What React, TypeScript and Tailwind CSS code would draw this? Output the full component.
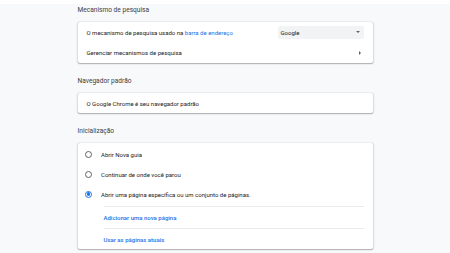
import React from "react"

const card =
  "rounded-[2px] bg-white shadow-[0_0.5px_1px_rgba(60,64,67,0.3),0_0.5px_1.5px_0.5px_rgba(60,64,67,0.15)]"

function SectionTitle({ children, first }: { children: React.ReactNode; first?: boolean }) {
  return (
    <div className={`${first ? "mt-[4px]" : "mt-[12px]"} mb-[6px] h-[12px] leading-[12px] text-[6.6px] text-[#3c4043]`}>
      {children}
    </div>
  )
}

function Radio({ checked }: { checked?: boolean }) {
  return (
    <span
      className={`grid size-[7px] place-items-center rounded-full border ${checked ? "border-[#1a73e8]" : "border-[#5f6368]"}`}
    >
      {checked && <span className="size-[3.5px] rounded-full bg-[#1a73e8]" />}
    </span>
  )
}

function RadioRow({ label, checked }: { label: string; checked?: boolean }) {
  return (
    <div className="flex h-[20px] items-center gap-[9px] pl-[7.5px]">
      <Radio checked={checked} />
      <span className="text-[6px] text-[#202124]">{label}</span>
    </div>
  )
}

export default function App() {
  return (
    <div className="min-h-[253px] w-full bg-[#f8f9fa] font-['Roboto',sans-serif]">
      <div className="mx-auto w-[295px]">
        <SectionTitle first>Mecanismo de pesquisa</SectionTitle>
        <div className={card}>
          <div className="flex h-[20px] items-center justify-between pl-[9px] pr-[9px]">
            <span className="text-[6px] text-[#202124]">
              O mecanismo de pesquisa usado na <span className="text-[#1a73e8]">barra de endereço</span>
            </span>
            <div className="flex h-[13px] w-[86px] items-center justify-between rounded-[2px] bg-[#f1f3f4] pl-[3px] pr-[4px]">
              <span className="text-[6px] text-[#202124]">Google</span>
              <span className="h-0 w-0 border-x-[2px] border-t-[2px] border-x-transparent border-t-[#5f6368]" />
            </div>
          </div>
          <div className="flex h-[21px] items-center justify-between pl-[9px] pr-[12px]">
            <span className="text-[6px] text-[#202124]">Gerenciar mecanismos de pesquisa</span>
            <span className="h-0 w-0 border-y-[2px] border-l-[2px] border-y-transparent border-l-[#5f6368]" />
          </div>
        </div>

        <SectionTitle>Navegador padrão</SectionTitle>
        <div className={card}>
          <div className="flex h-[20px] items-center pl-[9px]">
            <span className="text-[6px] text-[#202124]">O Google Chrome é seu navegador padrão</span>
          </div>
        </div>

        <SectionTitle>Inicialização</SectionTitle>
        <div className={`${card} pt-[1px]`}>
          <RadioRow label="Abrir Nova guia" />
          <RadioRow label="Continuar de onde você parou" />
          <RadioRow label="Abrir uma página específica ou um conjunto de páginas." checked />
          <div className="ml-[26px] mr-[9px] mt-[2px]">
            <div className="flex h-[22px] items-center border-t border-[#e8eaed] text-[6px] font-medium text-[#1a73e8]">
              Adicionar uma nova página
            </div>
            <div className="flex h-[21px] items-center border-t border-[#e8eaed] text-[6px] font-medium text-[#1a73e8]">
              Usar as páginas atuais
            </div>
          </div>
        </div>
      </div>
    </div>
  )
}
